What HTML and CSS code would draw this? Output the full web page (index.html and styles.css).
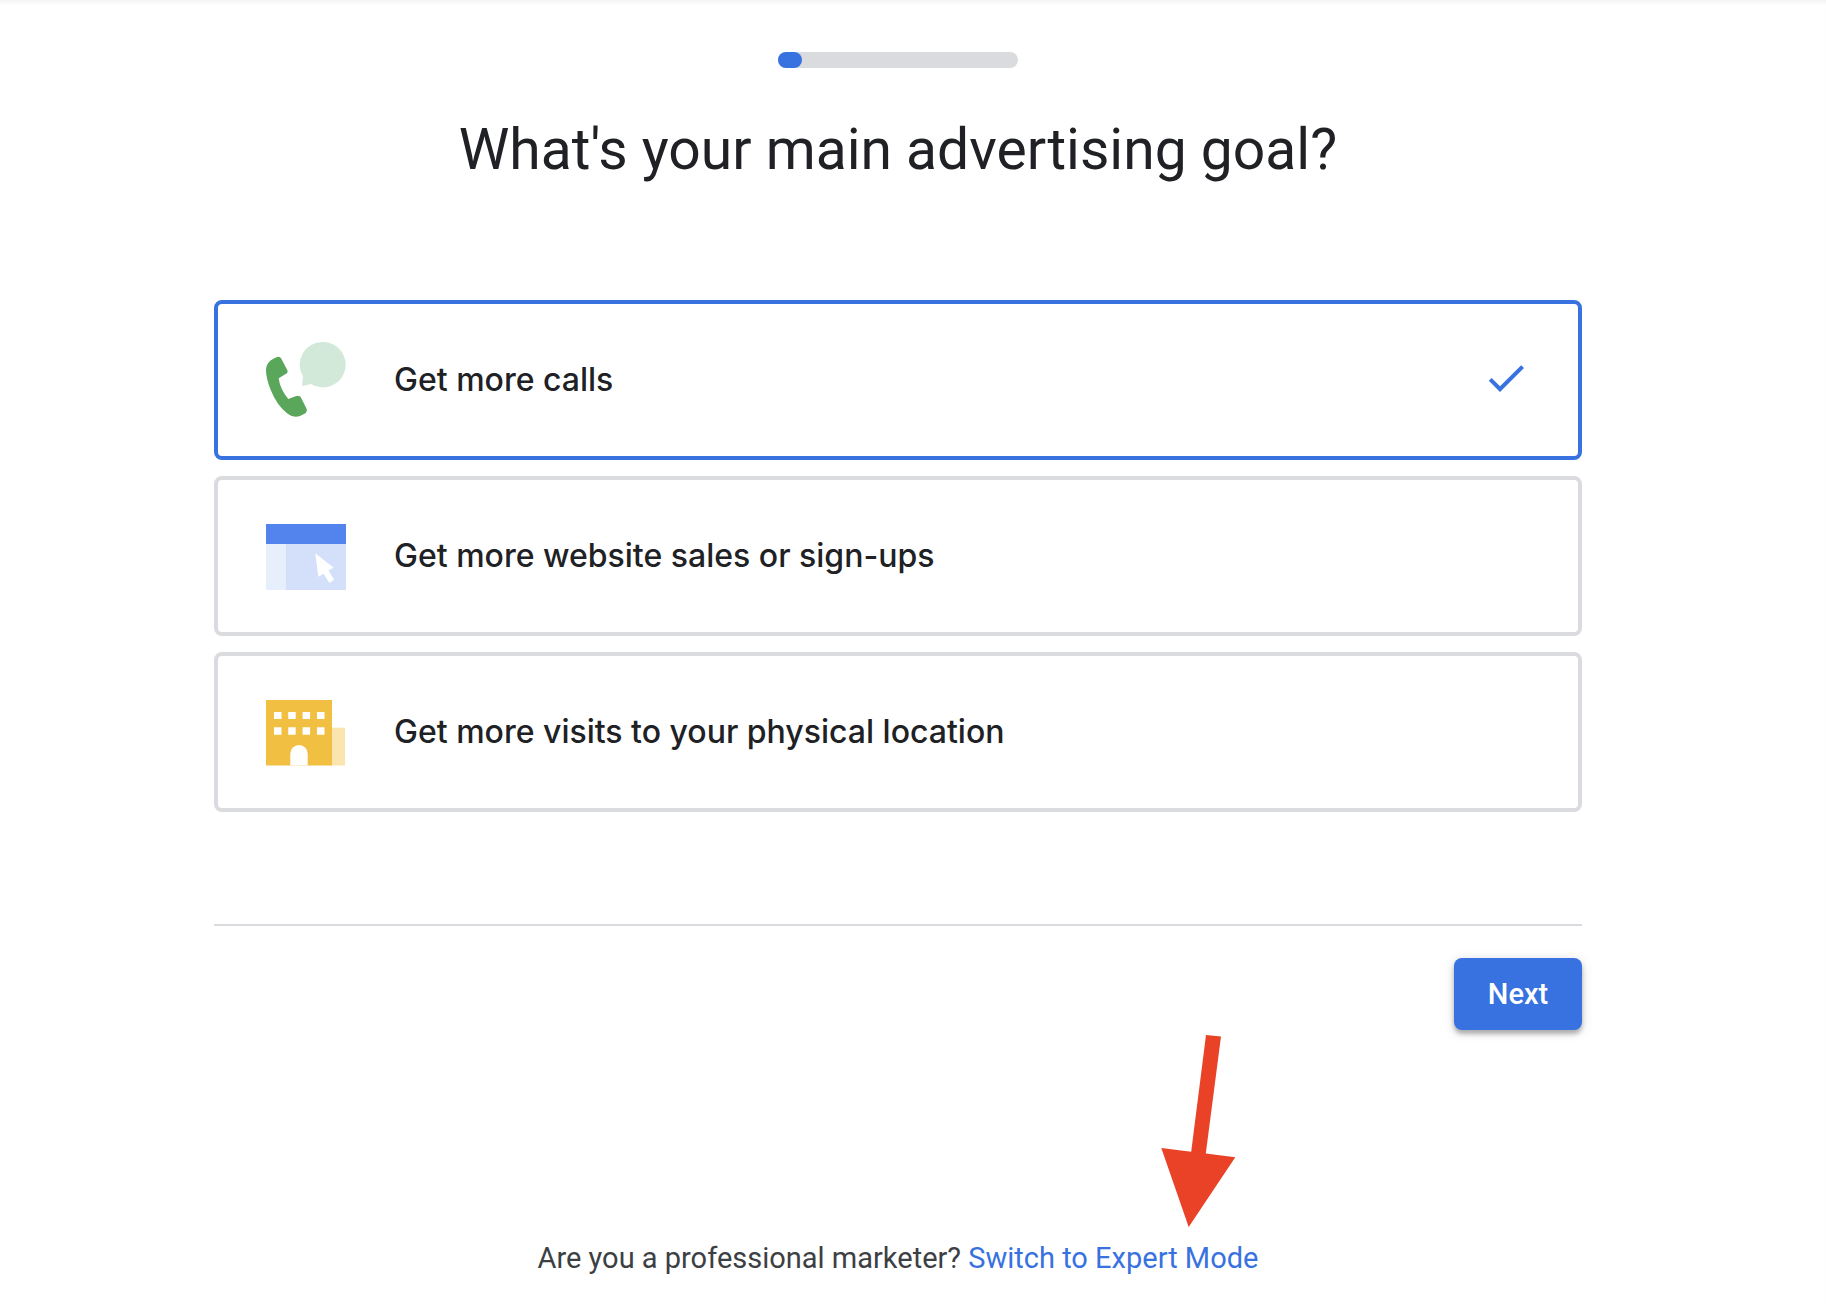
FILE: index.html
```html
<!DOCTYPE html>
<html lang="en">
<head>
  <meta charset="UTF-8" />
  <meta name="viewport" content="width=device-width, initial-scale=1.0" />
  <title>New campaign</title>
  <link rel="stylesheet" href="styles.css">
</head>
<body>

  <main class="page">
    <div class="progress" role="progressbar" aria-label="Setup progress" aria-valuenow="10" aria-valuemin="0" aria-valuemax="100">
      <div class="progress-fill" style="width: 10%"></div>
    </div>

    <h1>What's your main advertising goal?</h1>

    <form class="goal-form">
      <!-- Goal cards -->
      <div class="goals">
        <label class="goal">
          <input type="radio" name="goal" value="calls" checked>
          <svg class="goal-icon" viewBox="0 0 80 80" aria-hidden="true">
            <path fill="#d2e8d8" d="M56.7 2a22.7 22.7 0 1 1-11.7 42L36 46l1-9.500A22.700 22.700 0 0 1 56.700 2z"/>
            <path fill="#5aa75b" d="M4.500 20.500Q7 18.500 11 17Q13.800 16 15.200 18.400L21.500 30.500Q22.200 32.500 20.500 33.500L12.700 38.200Q14 49 22.300 59L30.300 56Q33.300 55 34.800 57.200L40.700 69Q41.500 71.500 39.500 73.200L34.500 75.800Q28 78.500 22 74Q11 66 4.500 49.500Q0 38 0 30Q0 24.500 4.500 20.500z"/>
          </svg>
          <span class="goal-text">Get more calls</span>
          <svg class="goal-check" viewBox="0 1 24 24" aria-hidden="true">
            <path d="M9 16.170L4.830 12l-1.420 1.410L9 19 21 7l-1.410-1.410z"/>
          </svg>
        </label>

        <label class="goal">
          <input type="radio" name="goal" value="website">
          <svg class="goal-icon" viewBox="0 0 80 80" aria-hidden="true">
            <path fill="#d4e0f9" d="M20 28h60v46H20z"/>
            <path fill="#e8effc" d="M0 28h20v46H0z"/>
            <path fill="#5383ec" d="M0 8h80v20H0z"/>
            <path fill="#fff" d="M49.300 37.300l18.400 14.400-5.200 2.600 5.500 9.400-4.700 3.300-5.600-9.300-5.400 3z"/>
          </svg>
          <span class="goal-text">Get more website sales or sign-ups</span>
          <svg class="goal-check" viewBox="0 1 24 24" aria-hidden="true">
            <path d="M9 16.170L4.830 12l-1.420 1.410L9 19 21 7l-1.410-1.410z"/>
          </svg>
        </label>

        <label class="goal">
          <input type="radio" name="goal" value="visits">
          <svg class="goal-icon" viewBox="0 0 80 80" aria-hidden="true">
            <path fill="#fbe5ae" d="M66 35.700h13v37.800H66z"/>
            <path fill="#f1bf42" d="M0 8h66v65.500H0z"/>
            <path fill="#fff" d="M8 20h7.500v7H8zM22.200 20h7.500v7h-7.500zM36.600 20h7.500v7h-7.500zM51 20h7.500v7H51zM8 35.300h7.500v7.400H8zM22.200 35.300h7.500v7.400h-7.500zM36.600 35.300h7.500v7.400h-7.500zM51 35.300h7.500v7.400H51zM24.300 73.500V61.700a8.700 8.700 0 0 1 17.400 0v11.800z"/>
          </svg>
          <span class="goal-text">Get more visits to your physical location</span>
          <svg class="goal-check" viewBox="0 1 24 24" aria-hidden="true">
            <path d="M9 16.170L4.830 12l-1.420 1.410L9 19 21 7l-1.410-1.410z"/>
          </svg>
        </label>
      </div>

      <div class="actions">
        <button type="submit" class="next">Next</button>
      </div>
    </form>

    <p class="expert">
      Are you a professional marketer?
      <a href="#expert">Switch to Expert Mode<svg class="arrow" viewBox="0 0 75 192" aria-hidden="true">
        <path fill="#ea4226" d="M45 0l15 1.500-15.200 117 29.500 3.800L27.700 192 .3 113l29.900 3.700z"/>
      </svg></a>
    </p>
  </main>

</body>
</html>
```

FILE: styles.css
```css
* {
  box-sizing: border-box;
}

body {
  margin: 0;
  padding-right: 30px;
  font-family: Roboto, sans-serif;
  background: #fff;
  box-shadow: inset 0 5px 5px -3px rgba(0, 0, 0, 0.06);
  color: #202124;
}

.page {
  max-width: 1416px;
  margin: 0 auto;
  padding: 52px 24px 24px;
}

/* Progress bar */
.progress {
  width: 240px;
  height: 16px;
  margin: 0 auto;
  border-radius: 8px;
  background: #dadbdf;
}

.progress-fill {
  height: 100%;
  border-radius: 8px;
  background: #3871e0;
}

h1 {
  margin: 48px 0 116px;
  font-family: "Google Sans", Roboto, sans-serif;
  font-size: 57px;
  font-weight: 400;
  line-height: 68px;
  text-align: center;
}

/* Goal cards */
.goals {
  display: grid;
  gap: 16px;
  padding-bottom: 112px;
  border-bottom: 2px solid #dadbdf;
}

.goal {
  position: relative;
  display: flex;
  align-items: center;
  gap: 48px;
  min-height: 160px;
  padding: 36px 48px;
  border: 4px solid #dadbdf;
  border-radius: 8px;
  cursor: pointer;
}

.goal input {
  position: absolute;
  opacity: 0;
}

.goal:has(input:checked) {
  border-color: #3871e0;
}

.goal-icon {
  flex: none;
  width: 80px;
  height: 80px;
}

.goal-text {
  flex: 1;
  font-family: "Google Sans", Inter, sans-serif;
  font-size: 32px;
  font-weight: 500;
  line-height: 48px;
}

.goal-check {
  flex: none;
  width: 48px;
  height: 48px;
  fill: #3871e0;
  visibility: hidden;
}

.goal input:checked ~ .goal-check {
  visibility: visible;
}

/* Buttons */
.actions {
  display: flex;
  justify-content: flex-end;
  padding-top: 32px;
}

.next {
  min-width: 128px;
  height: 72px;
  padding: 0 32px;
  border: none;
  border-radius: 8px;
  background: #3871e0;
  box-shadow: 0 4px 4px rgba(0, 0, 0, 0.25), 0 2px 12px rgba(0, 0, 0, 0.15);
  color: #fff;
  font-family: "Google Sans", Roboto, sans-serif;
  font-size: 29px;
  font-weight: 500;
  cursor: pointer;
}

/* Expert mode link */
.expert {
  margin: 208px 0 0;
  color: #3c4043;
  font-size: 29px;
  line-height: 40px;
  text-align: center;
}

.expert a {
  position: relative;
  display: inline-block;
  color: #3871e0;
  text-decoration: none;
}

.arrow {
  position: absolute;
  right: 22px;
  bottom: 51px;
  width: 75px;
  height: 192px;
}

@media (max-width: 768px) {
  h1 {
    margin: 32px 0 48px;
    font-size: 32px;
    line-height: 40px;
  }

  .goal {
    gap: 24px;
    padding: 24px;
  }

  .goal-text {
    font-size: 24px;
    line-height: 32px;
  }
}
```
